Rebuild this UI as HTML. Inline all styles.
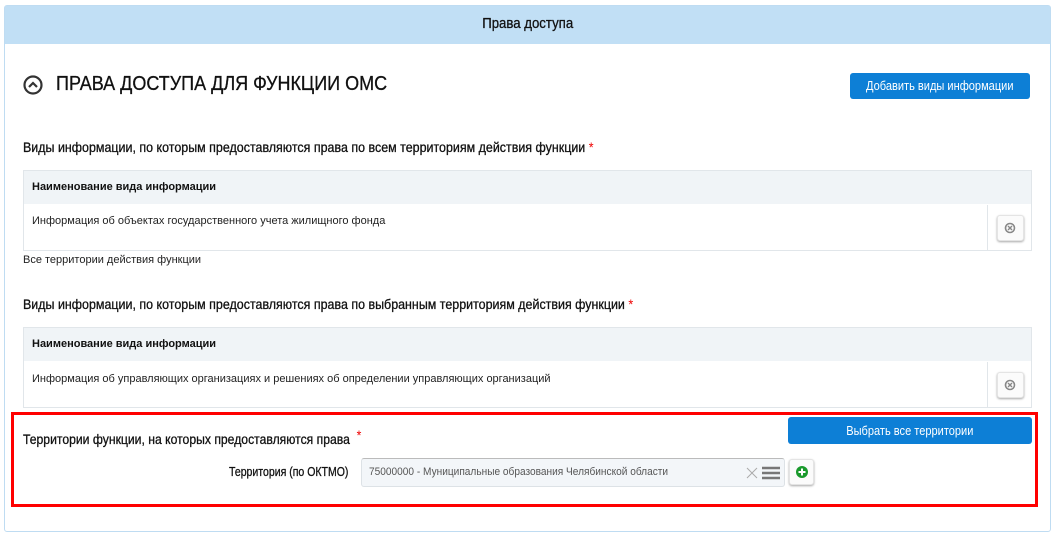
<!DOCTYPE html>
<html><head><meta charset="utf-8"><style>
*{margin:0;padding:0;box-sizing:border-box}
body{width:1056px;height:536px;background:#fff;font-family:"Liberation Sans",sans-serif;color:#111;position:relative;overflow:hidden}
.a{position:absolute}
.c{display:inline-block;transform-origin:left center;white-space:nowrap}
.btn{background:#0d7fd6;border-radius:3px;color:#fff;font-size:13px;text-align:center}
.sm{font-size:11px;color:#222}
.del{width:27px;height:26px;border-radius:3px;background:#fbfbfb;box-shadow:0 1px 2px rgba(0,0,0,.35);border:1px solid #e4e4e4}
.t{-webkit-text-stroke:0.3px #111}
.r{color:#e00;-webkit-text-stroke:0}
</style></head><body>
<div class="a" style="left:4px;top:5px;width:1047px;height:527px;border:1px solid #bfdcf2;border-radius:3px"></div>
<div class="a" style="left:5px;top:6px;width:1045px;height:38px;background:#c1dff5"></div>
<div class="a t" style="left:0;top:15px;width:1056px;text-align:center;font-size:15px"><span class="c" style="transform:scaleX(.88);transform-origin:center">Права доступа</span></div>

<svg class="a" style="left:22px;top:74px" width="22" height="22" viewBox="0 0 22 22"><circle cx="11" cy="11" r="8.5" fill="none" stroke="#333" stroke-width="2.2"/><path d="M7 13 L11 9 L15 13" fill="none" stroke="#333" stroke-width="2.2"/></svg>
<div class="a t" style="left:56px;top:73px;font-size:20px"><span class="c" style="transform:scaleX(.9)">ПРАВА ДОСТУПА ДЛЯ ФУНКЦИИ ОМС</span></div>
<div class="a btn" style="left:850px;top:73px;width:180px;height:26px;line-height:26px"><span class="c" style="transform:scaleX(.85);transform-origin:center">Добавить виды информации</span></div>

<div class="a t" style="left:23px;top:139px;font-size:14px"><span class="c" style="transform:scaleX(.89)">Виды информации, по которым предоставляются права по всем территориям действия функции <span class="r">*</span></span></div>
<div class="a" style="left:23px;top:170px;width:1009px;height:81px;border:1px solid #e1e6ea"></div>
<div class="a" style="left:24px;top:171px;width:1007px;height:33px;background:#f0f4f7"></div>
<div class="a" style="left:32px;top:181px;font-size:11px;font-weight:bold">Наименование вида информации</div>
<div class="a sm" style="left:32px;top:215px">Информация об объектах государственного учета жилищного фонда</div>
<div class="a" style="left:987px;top:205px;width:1px;height:45px;background:#e1e6ea"></div>
<div class="a del" style="left:997px;top:215px"></div>
<svg class="a" style="left:1004px;top:222px" width="12" height="12" viewBox="0 0 12 12"><circle cx="6" cy="6" r="4.5" fill="none" stroke="#888" stroke-width="1.6"/><path d="M4 4L8 8M8 4L4 8" stroke="#888" stroke-width="1.4"/></svg>
<div class="a sm" style="left:23px;top:254px">Все территории действия функции</div>

<div class="a t" style="left:23px;top:296px;font-size:14px"><span class="c" style="transform:scaleX(.89)">Виды информации, по которым предоставляются права по выбранным территориям действия функции <span class="r">*</span></span></div>
<div class="a" style="left:23px;top:327px;width:1009px;height:81px;border:1px solid #e1e6ea"></div>
<div class="a" style="left:24px;top:328px;width:1007px;height:33px;background:#f0f4f7"></div>
<div class="a" style="left:32px;top:338px;font-size:11px;font-weight:bold">Наименование вида информации</div>
<div class="a sm" style="left:32px;top:373px">Информация об управляющих организациях и решениях об определении управляющих организаций</div>
<div class="a" style="left:987px;top:362px;width:1px;height:45px;background:#e1e6ea"></div>
<div class="a del" style="left:997px;top:372px"></div>
<svg class="a" style="left:1004px;top:379px" width="12" height="12" viewBox="0 0 12 12"><circle cx="6" cy="6" r="4.5" fill="none" stroke="#888" stroke-width="1.6"/><path d="M4 4L8 8M8 4L4 8" stroke="#888" stroke-width="1.4"/></svg>

<div class="a" style="left:11px;top:412px;width:1027px;height:95px;border:3px solid #f00"></div>
<div class="a t" style="left:23px;top:427px;font-size:14px"><span class="c" style="transform:scaleX(.87)">Территории функции, на которых предоставляются права <span class="r" style="vertical-align:4px">&nbsp;*</span></span></div>
<div class="a btn" style="left:788px;top:417px;width:244px;height:27px;line-height:27px"><span class="c" style="transform:scaleX(.85);transform-origin:center">Выбрать все территории</span></div>
<div class="a t" style="left:229px;top:464px;font-size:13px"><span class="c" style="transform:scaleX(.81)">Территория (по ОКТМО)</span></div>
<div class="a" style="left:361px;top:458px;width:424px;height:29px;background:#f3f6f9;border:1px solid #dde2e6;border-top-color:#bbb;border-radius:3px"></div>
<div class="a" style="left:369px;top:466px;font-size:11px;color:#555"><span class="c" style="transform:scaleX(.92)">75000000 - Муниципальные образования Челябинской области</span></div>
<svg class="a" style="left:746px;top:465px" width="36" height="16" viewBox="0 0 36 16"><path d="M1 3L11 13M11 3L1 13" stroke="#aaa" stroke-width="1"/><path d="M16 3H34M16 8H34M16 13H34" stroke="#777" stroke-width="2.4"/></svg>
<div class="a del" style="left:789px;top:459px;width:25px;height:26px"></div>
<svg class="a" style="left:795px;top:465px" width="14" height="14" viewBox="0 0 14 14"><circle cx="7" cy="7" r="6" fill="#1a9a2c"/><path d="M7 3.5V10.5M3.5 7H10.5" stroke="#fff" stroke-width="2"/></svg>
</body></html>
